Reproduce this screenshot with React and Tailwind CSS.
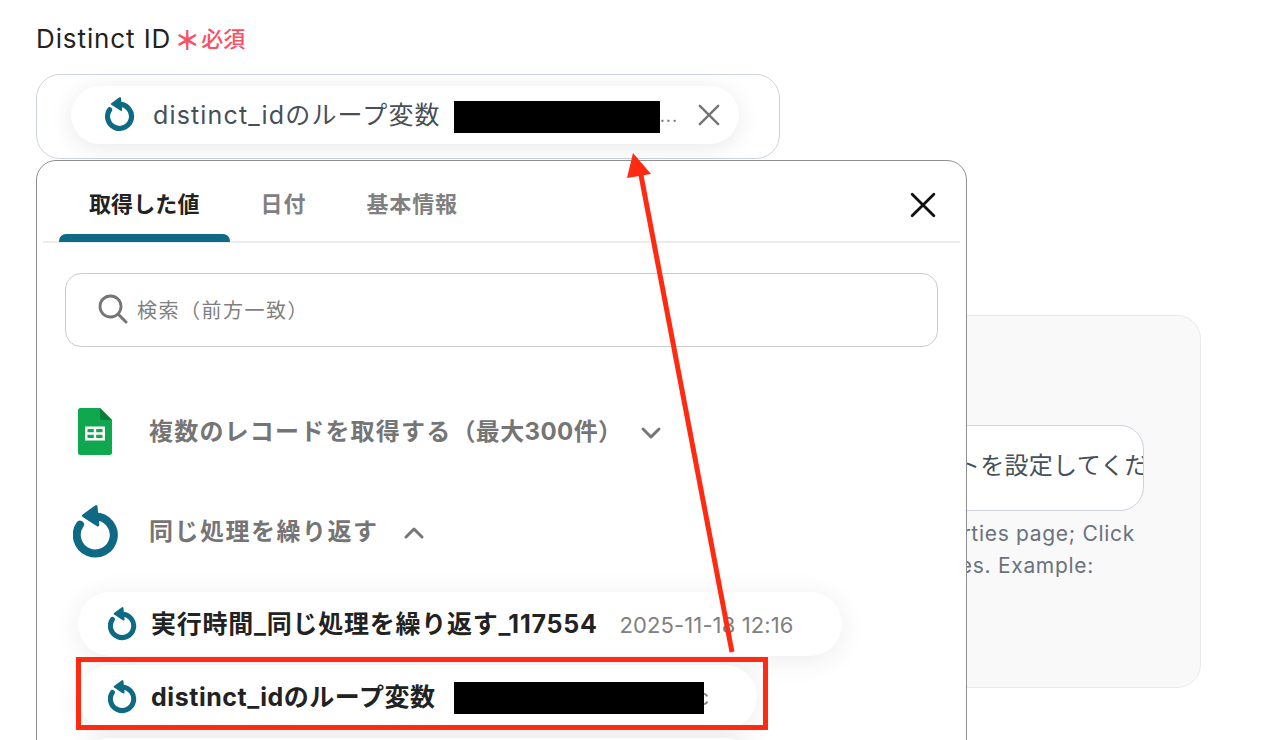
const FONT = "font-['Inter','Noto_Sans_CJK_JP',sans-serif]";

function Loop({ className }) {
  return (
    <svg viewBox="0 0 46 54" className={className} fill="none">
      <path d="M22.3 11.5 A18.5 18.5 0 1 1 7 19.6" stroke="#0e6a84" strokeWidth="8" strokeLinecap="round" />
      <path d="M10.5 10.7 L23 1.6 L24.8 20 Z" fill="#0e6a84" stroke="#0e6a84" strokeWidth="3" strokeLinejoin="round" />
    </svg>
  );
}

function Sheets({ className }) {
  return (
    <svg viewBox="0 0 34 47" className={className}>
      <path d="M2.5 0 H22 L34 12 V44.5 a2.5 2.5 0 0 1 -2.5 2.5 H2.5 A2.5 2.5 0 0 1 0 44.5 V2.5 A2.5 2.5 0 0 1 2.5 0 Z" fill="#0fa84e" />
      <path d="M22 0 L34 12 H24 a2 2 0 0 1 -2 -2 Z" fill="#0a7d38" />
      <path fillRule="evenodd" d="M7 18.5 H27 V32.5 H7 Z M9.5 21 V24.3 H15.8 V21 Z M18.2 21 V24.3 H24.5 V21 Z M9.5 26.7 V30 H15.8 V26.7 Z M18.2 26.7 V30 H24.5 V26.7 Z" fill="#fff" />
    </svg>
  );
}

function Chevron({ up, className }) {
  return (
    <svg viewBox="0 0 22 14" className={className} fill="none">
      <path d={up ? "M3 11 L11 3 L19 11" : "M3 3 L11 11 L19 3"} stroke="#757575" strokeWidth="3" strokeLinecap="round" strokeLinejoin="round" />
    </svg>
  );
}

function Cross({ className, color, width }) {
  return (
    <svg viewBox="0 0 24 24" className={className} fill="none">
      <path d="M2 2 L22 22 M22 2 L2 22" stroke={color} strokeWidth={width} strokeLinecap="round" />
    </svg>
  );
}

function Background() {
  return (
    <div className="flex flex-col pl-9 pt-[22px] w-[1201px]">
      <div className="flex items-center h-[34px]">
        <span className="text-[26px] leading-[34px] tracking-[0.9px] text-[#222]">Distinct ID</span>
        <span className="ml-[3px] text-[26px] leading-[34px] font-bold text-[#fb4f64] mt-[3px]">＊</span>
        <span className="ml-[1px] text-[22px] leading-[34px] font-medium text-[#fb4f64]">必須</span>
      </div>
      <div className="mt-[18px] w-[744px] h-[85px] rounded-[24px] border border-[#cdd3de] bg-white pl-[34px] pt-[11px]">
        <div className="flex items-center w-[668px] h-[58px] rounded-[29px] bg-white shadow-[0_4px_24px_rgba(0,0,0,0.09)] pl-[34px]">
          <Loop className="w-[30px] h-[35px] -mt-[2px] shrink-0" />
          <span className="ml-[18px] text-[25px] tracking-[1.15px] leading-[34px] text-[#465058] whitespace-nowrap">distinct_idのループ変数</span>
          <span className="ml-[13px] mt-[4px] w-[206px] h-8 bg-black shrink-0"></span>
          <span className="text-[18px] leading-[34px] tracking-[1px] text-[#777] mt-[2px] w-[17px]">...</span>
          <Cross className="ml-[21px] w-[22px] h-[22px]" color="#757575" width="2.6" />
        </div>
      </div>
      <div className="mt-[156px] h-[373px] rounded-[24px] border border-[#e7e9ec] bg-[#f9f9fa] flex flex-col items-end">
        <div className="mt-[109px] mr-[56px] w-[700px] h-[86px] rounded-[24px] border border-[#cdd3de] bg-white overflow-hidden flex items-center pl-[438px]">
          <span className="text-[24px] tracking-[0.3px] text-[#465058] whitespace-nowrap -mt-[4px]">イベントを設定してください</span>
        </div>
        <p className="mt-[7px] mr-[65px] text-[21px] leading-[32px] tracking-[0.7px] text-[#69727d] whitespace-nowrap">properties page; Click</p>
        <p className="mr-[106px] text-[21px] leading-[32px] tracking-[0.7px] text-[#69727d] whitespace-nowrap">properties. Example:</p>
      </div>
    </div>
  );
}

function Row({ width, children }) {
  return (
    <div className="flex items-center h-16 rounded-[32px] bg-white shadow-[0_4px_28px_rgba(0,0,0,0.08)] pl-[30px]" style={{ width }}>
      <Loop className="w-[29px] h-[34px] -mt-[1px] shrink-0" />
      {children}
    </div>
  );
}

function Popover() {
  return (
    <div className="absolute left-9 top-[160px] w-[931px] h-[640px] rounded-[20px] border border-[#8f8f8f] bg-white px-[6px] flex flex-col">
      <div className="relative h-[82px] border-b-2 border-[#ebebeb] flex items-start pl-[46px] shrink-0">
        <span className="mt-[27px] text-[22px] leading-8 tracking-[0.1px] font-bold text-[#222]">取得した値</span>
        <span className="ml-[61px] mt-[27px] text-[22px] leading-8 tracking-[1px] font-bold text-[#808080]">日付</span>
        <span className="ml-[60px] mt-[27px] text-[22px] leading-8 tracking-[0.8px] font-bold text-[#808080]">基本情報</span>
        <span className="absolute left-4 bottom-[-1px] w-[171px] h-[8px] rounded-t-[7px] bg-[#0e6a84]"></span>
        <Cross className="absolute left-[867px] top-[31px] w-[26px] h-[26px]" color="#111" width="2.6" />
      </div>
      <div className="mt-[30px] ml-[22px] w-[873px] h-[74px] rounded-[16px] border border-[#c9cccf] flex items-center pl-[32px] shrink-0">
        <svg viewBox="0 0 30 30" className="w-[30px] h-[30px] -mt-[2px]" fill="none">
          <circle cx="12.5" cy="12.5" r="10.5" stroke="#757575" strokeWidth="2.8" />
          <path d="M20.5 20.5 L28 28" stroke="#757575" strokeWidth="3" strokeLinecap="round" />
        </svg>
        <span className="ml-[9px] font-['Noto_Sans_CJK_JP',sans-serif] text-[20px] tracking-[1.5px] text-[#808080] leading-7">検索（前方一致）</span>
      </div>
      <div className="flex items-center ml-[35px] mt-[61px] h-[47px] shrink-0">
        <Sheets className="w-[34px] h-[47px] shrink-0" />
        <span className="ml-[37px] text-[24px] tracking-[1.2px] font-bold text-[#757575] whitespace-nowrap">複数のレコードを取得する<span className="tracking-[0.4px]">（最大300件）</span></span>
        <Chevron className="ml-[18px] w-[22px] h-[14px] mt-[3px]" />
      </div>
      <div className="flex items-center ml-[29px] mt-[50px] h-[53px] shrink-0">
        <Loop className="w-[46px] h-[54px] ml-[1px] shrink-0" />
        <span className="ml-[30px] text-[24px] tracking-[1.5px] font-bold text-[#757575] whitespace-nowrap">同じ処理を繰り返す</span>
        <Chevron up className="ml-[24px] w-[22px] h-[14px] mt-[2px]" />
      </div>
      <div className="flex flex-col gap-[9px] ml-[35px] mt-[34px] shrink-0">
        <Row width="764px">
          <span className="ml-[14px] mt-[2px] text-[25px] tracking-[0.75px] font-bold text-[#222] whitespace-nowrap">実行時間_同じ処理を繰り返す_117554</span>
          <span className="ml-[22px] mt-[2px] text-[22px] tracking-[0.1px] text-[#808080] whitespace-nowrap">2025-11-18 12:16</span>
        </Row>
        <Row width="679px">
          <span className="ml-[14px] mt-[2px] text-[25px] tracking-[0.55px] font-bold text-[#222] whitespace-nowrap">distinct_idのループ変数</span>
          <span className="relative z-10 ml-[18px] mt-[2px] w-[250px] h-8 bg-black shrink-0"></span>
          <span className="-ml-[7px] text-[22px] text-[#808080]">c</span>
        </Row>
        <Row width="679px" />
      </div>
    </div>
  );
}

export default function App() {
  return (
    <div className={`relative w-[1274px] h-[740px] overflow-hidden bg-white ${FONT}`}>
      <Background />
      <Popover />
      <div className="absolute left-[76px] top-[657px] w-[692px] h-[73px] border-[5px] border-[#ff2a12]"></div>
      <svg className="absolute left-0 top-0 pointer-events-none" width="1274" height="740" fill="none">
        <path d="M732 652 L640 170" stroke="#ff2a12" strokeWidth="5" />
        <path d="M633 153 L627 178 L651 174 Z" fill="#ff2a12" />
      </svg>
    </div>
  );
}
